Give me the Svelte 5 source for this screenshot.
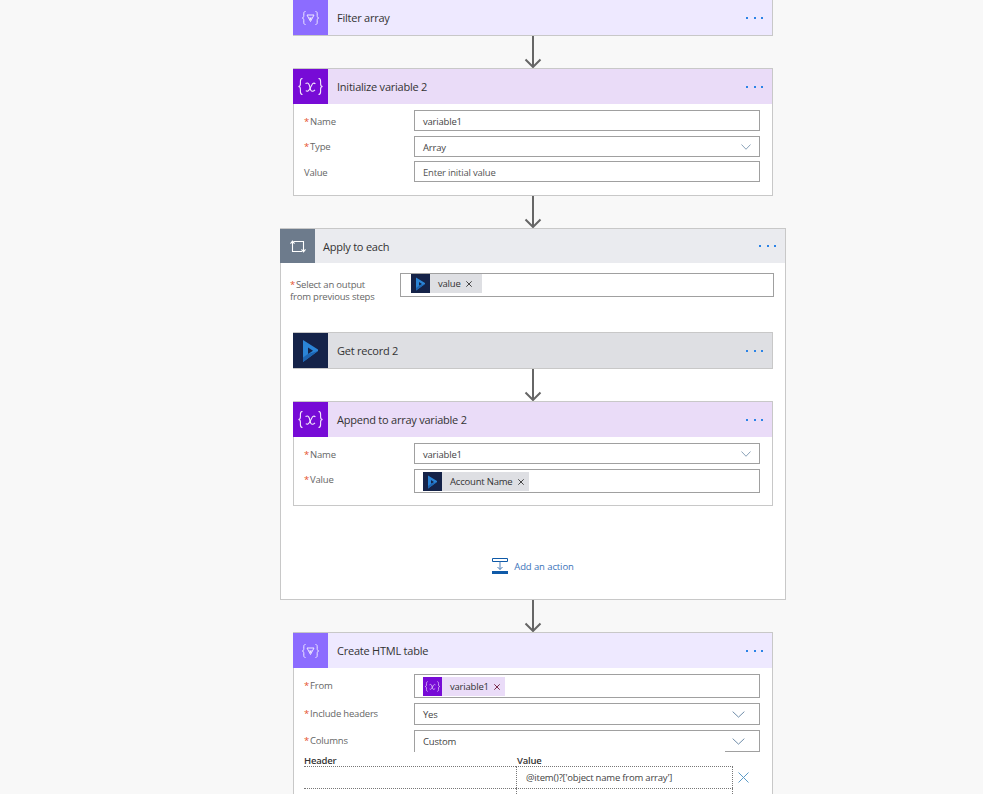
<script>
  const bracesL = 'M4.5 0.5C2.6 0.5 2.4 1.8 2.4 3.5V6C2.4 7.5 1.6 8.5 0.4 8.5C1.6 8.5 2.4 9.5 2.4 11V13.5C2.4 15.2 2.6 16.5 4.5 16.5';
  const bracesR = 'M20.5 0.5C22.4 0.5 22.6 1.8 22.6 3.5V6C22.6 7.5 23.4 8.5 24.6 8.5C23.4 8.5 22.6 9.5 22.6 11V13.5C22.6 15.2 22.4 16.5 20.5 16.5';
  const xa = 'M7.5 5.6C9.6 4.4 10.8 5 11.4 7.4L12.6 11.8C13.2 13.6 15 13.8 17 11.8';
  const xb = 'M7.8 12.6C9.4 14 10.6 13 12 10.4L13.8 7C14.6 5.2 16 4.6 17.4 5.8';
</script>

{#snippet dots()}
  <div class="dots"><i></i><i></i><i></i></div>
{/snippet}

{#snippet arrow()}
  <div class="arrow">
    <svg width="18" height="32" viewBox="0 0 18 32" fill="none" stroke="#666" stroke-width="2">
      <path d="M9 0V30" />
      <path d="M1.5 23.5L9 31L16.5 23.5" />
    </svg>
  </div>
{/snippet}

{#snippet varIcon(w, h)}
  <svg width={w} height={h} viewBox="0 0 25 17" fill="none" stroke="#f3eafc" stroke-width="1.1">
    <path d={bracesL} />
    <path d={bracesR} />
    <path d={xa} />
    <path d={xb} />
  </svg>
{/snippet}

{#snippet filterIcon()}
  <div class="icon filter-bg">
    <svg width="17" height="14" viewBox="0 0 17 14" fill="none" stroke="#eee8ff" stroke-width="1">
      <path d="M3.5 0.5C1.9 0.5 1.8 1.6 1.8 2.8V4.8C1.8 6 1.2 7 0.3 7C1.2 7 1.8 8 1.8 9.2V11.2C1.8 12.4 1.9 13.5 3.5 13.5" />
      <path d="M13.5 0.5C15.1 0.5 15.2 1.6 15.2 2.8V4.8C15.2 6 15.8 7 16.7 7C15.8 7 15.2 8 15.2 9.2V11.2C15.2 12.4 15.1 13.5 13.5 13.5" />
      <path d="M5 4H12L8.5 10.5Z" />
      <path d="M7 6.6H10L8.5 9.4Z" fill="#eee8ff" stroke="none" />
    </svg>
  </div>
{/snippet}

{#snippet dynIcon(w, h)}
  <svg width={w} height={h} viewBox="0 0 15 22">
    <path d="M0 0L15 9.5V11L0 22ZM5 7.5V14L10 10.8Z" fill="#2b84d6" fill-rule="evenodd" />
    <path d="M5 14L15 11L0 22V17.5Z" fill="#1d65b3" />
  </svg>
{/snippet}

{#snippet chevron(w, h)}
  <svg class="chev" width={w} height={h} viewBox="0 0 14 8" fill="none" stroke="#5f7f9f" stroke-width="1" preserveAspectRatio="none"><path d="M0.7 0.7L7 7L13.3 0.7" /></svg>
{/snippet}

{#snippet close(color)}
  <svg class="tok-x" width="6" height="6" viewBox="0 0 6 6" fill="none" stroke={color} stroke-width="1"><path d="M0.3 0.3L5.7 5.7M5.7 0.3L0.3 5.7" /></svg>
{/snippet}

{#snippet dynToken(text)}
  <span class="token dyn-token">
    <span class="token-icon dyn-bg">{@render dynIcon(9, 14)}</span>
    <span class="token-text">{text}</span>
    {@render close('#444')}
  </span>
{/snippet}

{#snippet label(text, req)}
  <div class="label">{#if req}<span class="req">*</span>{/if}{text}</div>
{/snippet}

<main class="canvas">
  <section class="card">
    <header class="head filter-head">
      {@render filterIcon()}
      <div class="title">Filter array</div>
      {@render dots()}
    </header>
  </section>

  {@render arrow()}

  <section class="card top">
    <header class="head var-head">
      <div class="icon var-bg">{@render varIcon(25, 17)}</div>
      <div class="title">Initialize variable 2</div>
      {@render dots()}
    </header>
    <div class="body init-body">
      <div class="row r-21">
        {@render label('Name', true)}
        <div class="field">variable1</div>
      </div>
      <div class="row r-21 mt5">
        {@render label('Type', true)}
        <div class="field select-s">Array {@render chevron(10, 6)}</div>
      </div>
      <div class="row r-21 mt4">
        {@render label('Value', false)}
        <div class="field placeholder">Enter initial value</div>
      </div>
    </div>
  </section>

  {@render arrow()}

  <section class="card top apply">
    <header class="head apply-head">
      <div class="icon apply-bg">
        <svg width="16" height="13" viewBox="0 0 16 13" fill="none" stroke="#fff" stroke-width="1.1">
          <path d="M2.5 1.5V11.5H12" />
          <path d="M0.5 3.6L2.5 1.2L4.5 3.6" />
          <path d="M3.5 1.5H13.5V11.5" />
          <path d="M11.5 9.4L13.5 11.8L15.5 9.4" />
        </svg>
      </div>
      <div class="title">Apply to each</div>
      {@render dots()}
    </header>
    <div class="apply-body">
      <div class="select-row">
        <div class="label two-line"><span class="req">*</span>Select an output<br />from previous steps</div>
        <div class="field token-field tight">{@render dynToken('value')}</div>
      </div>

      <div class="inner">
        <section class="card top">
          <header class="head dyn-head">
            <div class="icon dyn-bg">{@render dynIcon(15, 22)}</div>
            <div class="title">Get record 2</div>
            {@render dots()}
          </header>
        </section>

        {@render arrow()}

        <section class="card top">
          <header class="head var-head">
            <div class="icon var-bg">{@render varIcon(25, 17)}</div>
            <div class="title">Append to array variable 2</div>
            {@render dots()}
          </header>
          <div class="body append-body">
            <div class="row r-21">
              {@render label('Name', true)}
              <div class="field select-s">variable1 {@render chevron(10, 6)}</div>
            </div>
            <div class="row r-24 mt5">
              {@render label('Value', true)}
              <div class="field token-field">{@render dynToken('Account Name')}</div>
            </div>
          </div>
        </section>
      </div>

      <div class="add">
        <svg width="16" height="16" viewBox="0 0 16 16" fill="none">
          <path d="M0.5 0.5H15.5V3.5H0.5Z" stroke="#0f5aa8" stroke-width="1" />
          <path d="M8 3.5V11.5M5.5 9L8 11.5L10.5 9" stroke="#4a7db8" stroke-width="1" />
          <rect x="0" y="13" width="16" height="3" fill="#0f5aa8" />
        </svg>
        <span>Add an action</span>
      </div>
    </div>
  </section>

  {@render arrow()}

  <section class="card top">
    <header class="head filter-head">
      {@render filterIcon()}
      <div class="title">Create HTML table</div>
      {@render dots()}
    </header>
    <div class="body">
      <div class="row r-24 from">
        {@render label('From', true)}
        <div class="field token-field">
          <span class="token var-token">
            <span class="token-icon var-bg">{@render varIcon(15, 11)}</span>
            <span class="token-text">variable1</span>
            {@render close('#7a2a4a')}
          </span>
        </div>
      </div>
      <div class="row r-22 mt5">
        {@render label('Include headers', true)}
        <div class="field select-l">Yes {@render chevron(13, 7)}</div>
      </div>
      <div class="row r-22 mt5">
        {@render label('Columns', true)}
        <div class="field open-field">
          <span>Custom</span>
          <span class="open-chev">{@render chevron(13, 7)}</span>
        </div>
      </div>
      <div class="kv">
        <div class="kv-head"><span class="kv-key">Header</span><span>Value</span></div>
        <div class="kv-row">
          <div class="kv-left"></div>
          <div class="kv-right">@item()?['object name from array']</div>
          <svg class="kv-x" width="11" height="11" viewBox="0 0 11 11" fill="none" stroke="#5c9bc7" stroke-width="1"><path d="M0.5 0.5L10.5 10.5M10.5 0.5L0.5 10.5" /></svg>
        </div>
        <div class="kv-row">
          <div class="kv-left"></div>
          <div class="kv-right"></div>
        </div>
      </div>
    </div>
  </section>
</main>

<style>
  :global(body) {
    margin: 0;
    background: #f8f8f8;
    overflow: hidden;
  }
  .canvas {
    height: 794px;
    overflow: hidden;
    display: flex;
    flex-direction: column;
    width: 506px;
    margin-left: 280px;
    align-items: center;
    font-family: "Open Sans", "Noto Sans", sans-serif;
    font-size: 9.5px;
    letter-spacing: -0.2px;
    color: #444;
  }
  .card {
    width: 480px;
    box-sizing: border-box;
    border: 1px solid #c8c8c8;
    border-top: none;
    background: #fff;
    flex: none;
  }
  .card.top { border-top: 1px solid #c8c8c8; }
  .card.apply { width: 506px; }
  .head {
    height: 35px;
    display: flex;
    align-items: center;
  }
  .apply-head { height: 34px; }
  .icon {
    width: 35px;
    height: 35px;
    margin-left: -1px;
    display: flex;
    align-items: center;
    justify-content: center;
    flex: none;
  }
  .apply-head .icon { height: 34px; }
  .title {
    flex: 1;
    margin-left: 9px;
    font-size: 11px;
    letter-spacing: -0.23px;
    color: #333;
  }
  .apply-head .title { margin-left: 8px; }
  .filter-head { background: #eee9ff; }
  .var-head { background: #eadcf8; }
  .apply-head { background: #eaebef; }
  .dyn-head { background: #dedfe3; }
  .filter-bg { background: #8c6cff; }
  .var-bg { background: #770bd6; }
  .apply-bg { background: #6d7b8c; }
  .dyn-bg { background: #152349; }
  .dots {
    display: flex;
    gap: 5.5px;
    margin-right: 9px;
  }
  .dots i {
    width: 2px;
    height: 2px;
    background: #2b83e6;
    display: block;
  }
  .body { padding: 6px 12px 0 10px; }
  .init-body { height: 91px; box-sizing: border-box; }
  .append-body { padding-bottom: 12px; }
  .row { display: flex; }
  .r-21 { height: 21px; }
  .r-22 { height: 22px; }
  .r-24 { height: 24px; }
  .mt4 { margin-top: 4px; }
  .mt5 { margin-top: 5px; }
  .label {
    width: 110px;
    flex: none;
    line-height: 21px;
    color: #666;
  }
  .r-21 .label, .from .label { line-height: 23px; }
  .r-21.mt5 .label { line-height: 21px; }
  .req { color: #e5502d; margin-right: 1px; }
  .field {
    flex: 1;
    box-sizing: border-box;
    border: 1px solid #a0a0a0;
    background: #fff;
    padding-left: 8px;
    display: flex;
    align-items: center;
    justify-content: space-between;
    color: #444;
  }
  .r-21 .field, .r-24 .field { padding-top: 1px; }
  .placeholder { color: #555; }
  .select-s { padding-right: 8px; }
  .select-l { padding-right: 14px; }
  .token-field { justify-content: flex-start; }
  .token {
    height: 19px;
    display: flex;
    align-items: center;
  }
  .token-icon {
    width: 19px;
    height: 19px;
    display: flex;
    align-items: center;
    justify-content: center;
  }
  .dyn-token { background: #dedfe3; }
  .var-token { background: #eadcf8; }
  .token-text { padding: 0 5px 0 8px; color: #333; }
  .tok-x { margin-right: 5px; }
  .tight .tok-x { margin-right: 10px; }
  .apply-body {
    padding-top: 10px;
    height: 336px;
    box-sizing: border-box;
    display: flex;
    flex-direction: column;
  }
  .select-row { display: flex; padding: 0 11px 0 9px; height: 24px; }
  .two-line { line-height: 12px; padding-top: 6px; height: auto; }
  .tight { padding-left: 10px; align-items: flex-start; }
  .inner { margin: 35px 0 0 12px; width: 480px; }
  .add {
    display: flex;
    align-items: center;
    justify-content: center;
    gap: 6px;
    margin-top: 52px;
    color: #3b73b9;
    letter-spacing: -0.1px;
  }
  .open-field {
    border-bottom: none;
    padding-right: 0;
    align-items: stretch;
    line-height: 21px;
  }
  .open-chev {
    width: 34px;
    border-bottom: 1px solid #a0a0a0;
    display: flex;
    align-items: center;
    justify-content: flex-end;
    padding-right: 14px;
    box-sizing: border-box;
  }
  .kv { margin-top: 3px; }
  .kv-head {
    display: flex;
    font-weight: 600;
    color: #333;
    line-height: 12px;
    height: 11px;
  }
  .kv-key { width: 213px; }
  .kv-row {
    display: flex;
    height: 22px;
    align-items: stretch;
  }
  .kv-left {
    width: 212px;
    border-top: 1px dotted #777;
  }
  .kv-right {
    width: 217px;
    box-sizing: border-box;
    border: 1px dotted #777;
    border-bottom: none;
    padding-left: 9px;
    display: flex;
    align-items: center;
  }
  .kv-x { align-self: center; margin-left: 5px; }
  .arrow {
    height: 32px;
    flex: none;
    display: flex;
    justify-content: center;
  }
</style>
